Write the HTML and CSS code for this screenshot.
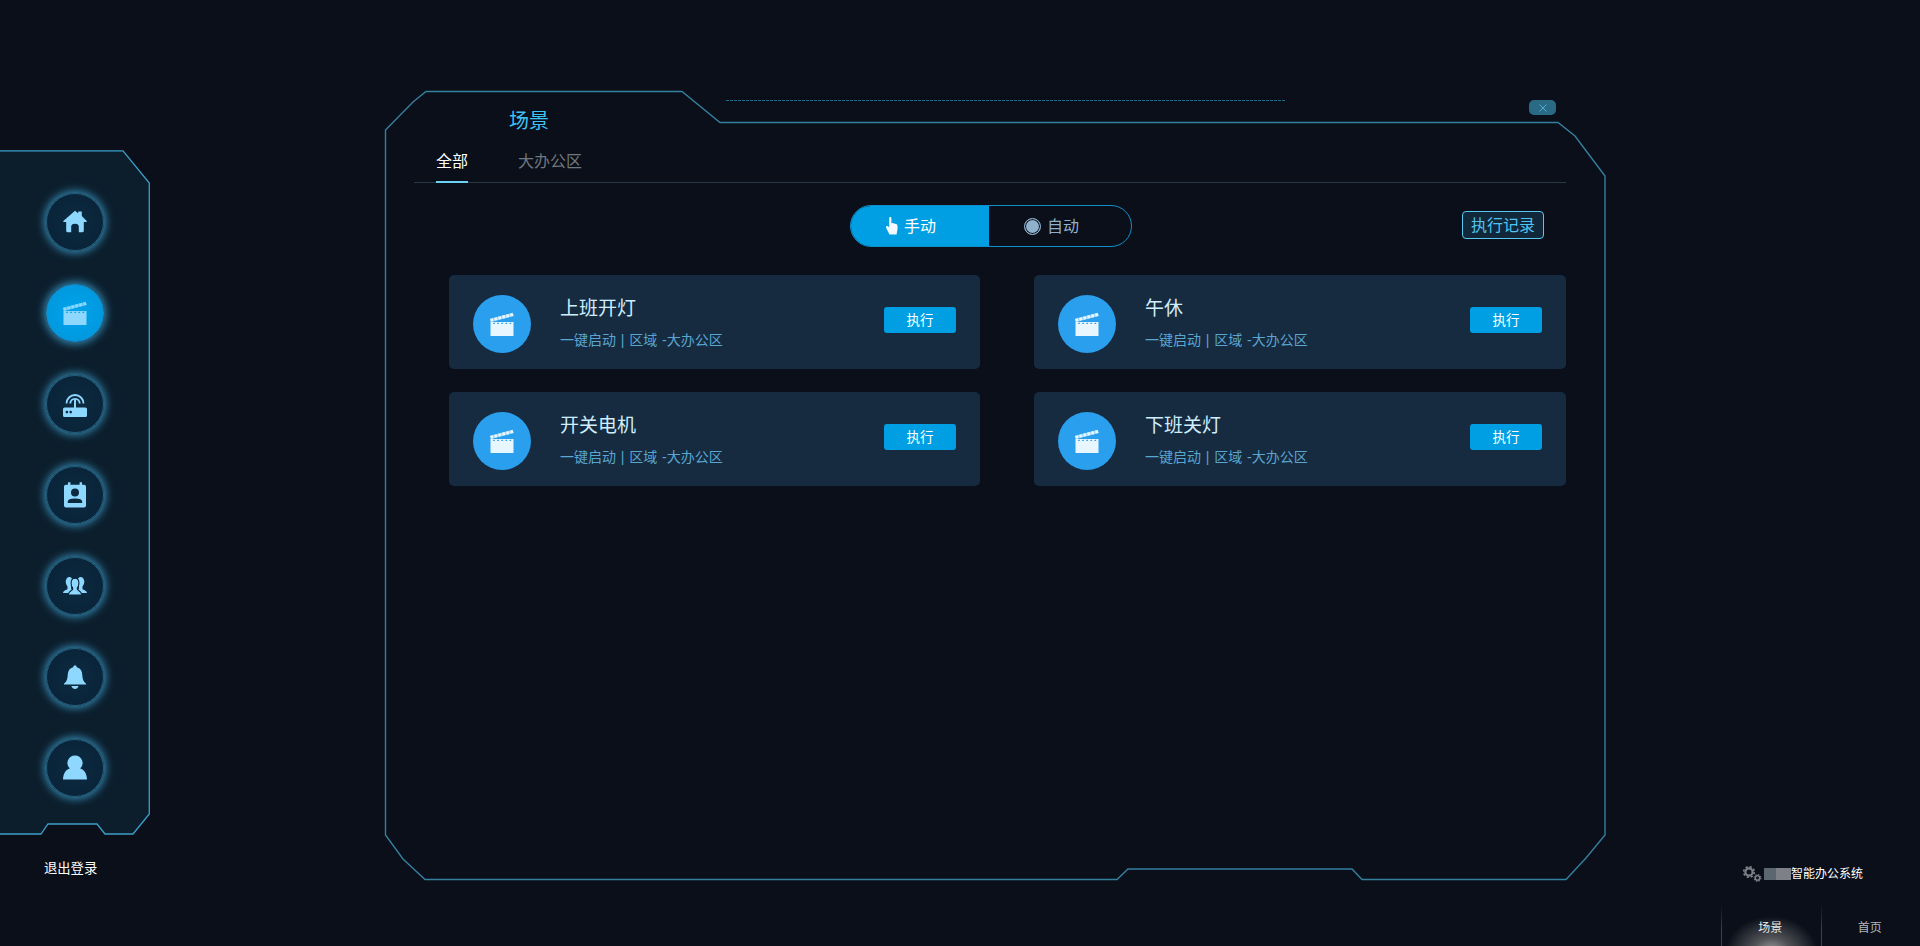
FILE: index.html
```
<!DOCTYPE html>
<html lang="zh-CN">
<head>
<meta charset="utf-8">
<title>场景</title>
<link rel="stylesheet" href="styles.css">
</head>
<body>
<svg class="defs" width="0" height="0" aria-hidden="true">
  <symbol id="clapper" viewBox="0 0 24 24">
    <path fill-rule="evenodd" d="M.5 10h23v15H.5zM3.500 10.800l-.6 1.300h1.600l.6-1.300zM7.600 10.800l-.6 1.300h1.600l.6-1.300zM11.700 10.800l-.6 1.300h1.600l.6-1.300zM15.800 10.800l-.6 1.300h1.600l.6-1.300zM19.900 10.800l-.6 1.300h1.600l.6-1.300z"/>
    <path d="M0 6.800L22.800 .8l.9 3.200L.8 10z" opacity=".6"/>
    <line x1=".5" y1="8.400" x2="23.200" y2="2.400" stroke="currentColor" stroke-width="3" stroke-dasharray="2.800 1.300"/>
  </symbol>
</svg>

<div class="app">
  <aside class="side">
    <div class="side-box">
      <svg class="frame" viewBox="0 0 150 686" aria-hidden="true">
        <path class="side-shape" d="M-2 .8H123L149.300 33V664L133 684H105L97 674H48L41 684H-2z"/>
      </svg>
      <nav class="side-nav">
        <a class="orb">
          <svg class="ico" viewBox="0 0 24 24"><path d="M12 .8l3.200 2.400V1.600h3.600v4.400L24 11.200l-.8.9h-2.400v8.600q0 1.600-1.600 1.600h-3.400v-5.600q0-3-3.800-3t-3.800 3v5.600H4.800q-1.600 0-1.600-1.600v-8.600H.8l-.8-.9z"/></svg>
        </a>
        <a class="orb orb-on">
          <svg class="ico"><use href="#clapper"/></svg>
        </a>
        <a class="orb">
          <svg class="ico" viewBox="0 0 24 24"><path fill-rule="evenodd" d="M1.600 15.400h9.400V7.500h2v7.900h9.400q1.600 0 1.600 1.600v6.400q0 1.600-1.600 1.600H1.600Q0 25 0 23.400V17q0-1.600 1.600-1.600zM3.900 18.800a1.300 1.300 0 100 2.600 1.300 1.300 0 000-2.600zM7.700 18.800a1.300 1.300 0 100 2.600 1.300 1.300 0 000-2.600z"/><path class="arc" d="M3.500 11.500a8.500 8.500 0 0117 0M7.300 11.500a4.700 4.700 0 019.400 0"/></svg>
        </a>
        <a class="orb">
          <svg class="ico" viewBox="0 0 24 24"><path fill-rule="evenodd" d="M5 -.8h2.400v2.600h9.200V-.8H19v2.600h2.100q1.900 0 1.900 1.900v18.800q0 1.900-1.900 1.900H2.900q-1.900 0-1.900-1.900V3.700q0-1.900 1.900-1.900H5zM12 5.400a4 4 0 100 8 4 4 0 000-8zM4.800 20h14.400v-1.400q0-3.100-7.200-3.100t-7.200 3.100z"/></svg>
        </a>
        <a class="orb">
          <svg class="ico" viewBox="0 0 24 24">
            <ellipse cx="6.300" cy="7.800" rx="3.600" ry="4.800"/>
            <ellipse cx="17.700" cy="7.800" rx="3.600" ry="4.800"/>
            <path d="M0 19c.2-2.500 3.400-3 4.500-4.100v-3.500h3.600v3.500l2 1.200-3.500 2.900zM24 19c-.2-2.500-3.400-3-4.500-4.100v-3.500h-3.600v3.500l-2 1.200 3.500 2.900z"/>
            <path class="guy" d="M12 4.300c2.500 0 3.900 2.100 3.900 4.900 0 2.100-.8 3.700-1.500 4.500v1.800c1 1 4 1.700 4.500 5.500H5.100c.5-3.800 3.500-4.500 4.500-5.500v-1.800c-.7-.8-1.500-2.400-1.500-4.500 0-2.800 1.400-4.900 3.900-4.900z"/>
          </svg>
        </a>
        <a class="orb">
          <svg class="ico" viewBox="0 0 24 24"><path d="M12 .2q1.400 0 1.900 2.100 5.100 1.300 5.400 7.700.2 6.300 3.300 8.200.5.400.5 1v.4H.9v-.4q0-.6.5-1 3.100-1.900 3.300-8.200.3-6.400 5.400-7.700.5-2.100 1.900-2.100zM8.400 21h7.200q-1 3-3.600 3t-3.600-3z"/></svg>
        </a>
        <a class="orb">
          <svg class="ico" viewBox="0 0 24 24"><path d="M12 -.6a7.600 7.600 0 015.200 13.100c3.800 1.300 6.600 4.600 6.800 11.100H0c.2-6.500 3-9.800 6.800-11.100A7.600 7.600 0 0112-.6z"/></svg>
        </a>
      </nav>
    </div>
    <a class="logout">退出登录</a>
  </aside>

  <main class="panel">
    <svg class="frame" viewBox="0 0 1221 789" aria-hidden="true">
      <path class="panel-shape" d="M.5 39L28 11 41 .5H297L335 31.500H1173L1190 45 1220 85V744L1201 767 1181 788.500H977L967 778H743L732 788.500H40L18 768 .5 744z"/>
      <line class="dash" x1="341" y1="9.500" x2="901" y2="9.500"/>
    </svg>
    <a class="close">
      <svg viewBox="0 0 8 8" width="8" height="8"><path d="M.5.500l7 7M7.500.500l-7 7"/></svg>
    </a>
    <h1 class="title">场景</h1>
    <div class="tabs">
      <a class="tab tab-on">全部</a>
      <a class="tab">大办公区</a>
    </div>
    <div class="toolbar">
      <div class="switch">
        <a class="sw sw-on">
          <svg class="hand" viewBox="0 0 12 18"><path d="M3.200 1.200C3.200.4 3.700 0 4.300 0s1.100.4 1.100 1.200v5l.9-.2c.7-.1 1 .1 1.200.4l1 .1c.6 0 .9.200 1.100.6.900-.1 1.500.3 1.700 1 .5 2 .3 4.700-.2 6.200L10.600 17.500H3.500L.4 11.500c-.6-1.200-.5-2 .2-2.400.6-.3 1.300 0 2.600 1.500z"/></svg>
          <span class="sw-text">手动</span>
        </a>
        <a class="sw">
          <span class="radio"></span>
          <span class="sw-text">自动</span>
        </a>
      </div>
      <a class="record">执行记录</a>
    </div>
    <section class="cards">
      <article class="card">
        <span class="badge"><svg class="ico"><use href="#clapper"/></svg></span>
        <div class="info"><h2>上班开灯</h2><p>一键启动 | 区域 -大办公区</p></div>
        <button class="run">执行</button>
      </article>
      <article class="card">
        <span class="badge"><svg class="ico"><use href="#clapper"/></svg></span>
        <div class="info"><h2>午休</h2><p>一键启动 | 区域 -大办公区</p></div>
        <button class="run">执行</button>
      </article>
      <article class="card">
        <span class="badge"><svg class="ico"><use href="#clapper"/></svg></span>
        <div class="info"><h2>开关电机</h2><p>一键启动 | 区域 -大办公区</p></div>
        <button class="run">执行</button>
      </article>
      <article class="card">
        <span class="badge"><svg class="ico"><use href="#clapper"/></svg></span>
        <div class="info"><h2>下班关灯</h2><p>一键启动 | 区域 -大办公区</p></div>
        <button class="run">执行</button>
      </article>
    </section>
  </main>

  <footer class="corner">
    <div class="brand">
      <svg class="gears" viewBox="0 0 20 16" width="20" height="16">
        <circle class="gear-a" cx="7" cy="6" r="3.600"/>
        <circle class="teeth-a" cx="7" cy="6" r="5.300"/>
        <circle class="gear-b" cx="15.500" cy="12" r="2.200"/>
        <circle class="teeth-b" cx="15.500" cy="12" r="3.400"/>
      </svg>
      <span class="mask"><i class="m1"></i><i class="m2"></i></span>
      <span>智能办公系统</span>
    </div>
    <div class="dock">
      <a class="dock-item dock-on">场景</a>
      <a class="dock-item">首页</a>
    </div>
  </footer>
</div>
</body>
</html>
```

FILE: styles.css
```
* { box-sizing: border-box; }
html, body { margin: 0; padding: 0; }
body {
  background: #0a0f19;
  font-family: "Liberation Sans", "Noto Sans CJK SC", sans-serif;
  overflow: hidden;
}
a { text-decoration: none; color: inherit; }
h1, h2, p { margin: 0; font-weight: 400; }
.defs { position: absolute; }

.app {
  display: flex;
  width: 1920px;
  height: 946px;
}

.frame {
  position: absolute;
  left: 0;
  top: 0;
  width: 100%;
  height: 100%;
  overflow: visible;
}

/* sidebar */
.side {
  width: 150px;
  flex: none;
  padding-top: 150px;
  display: flex;
  flex-direction: column;
}
.side-box {
  position: relative;
  width: 150px;
  height: 686px;
}
.side-shape {
  fill: #0c1e2c;
  stroke: #3d9fc9;
  stroke-width: 1.300;
}
.side-nav {
  position: relative;
  display: flex;
  flex-direction: column;
  align-items: center;
  gap: 33px;
  padding-top: 43px;
}
.orb {
  width: 58px;
  height: 58px;
  border-radius: 50%;
  display: flex;
  align-items: center;
  justify-content: center;
  color: #8ed8ff;
  background: radial-gradient(circle, #0b2a40 0%, #0a2439 75%, #0f3a55 100%);
  border: 1px solid #24617f;
  box-shadow: 0 0 8px 2px rgba(61, 158, 205, .85);
}
.orb-on {
  background: radial-gradient(circle, #00a4ed 0%, #0098de 75%, #0a86c2 100%);
  border-color: #1a8cc4;
}
.ico {
  width: 24px;
  height: 24px;
  fill: currentColor;
  overflow: visible;
  display: block;
}
.arc {
  fill: none;
  stroke: currentColor;
  stroke-width: 1.800;
}
.guy {
  stroke: #0a2439;
  stroke-width: 1.100;
}
.logout {
  margin: 22px 0 0 44px;
  font-size: 13.300px;
  line-height: 22px;
  color: #fff;
}

/* main panel */
.panel {
  position: relative;
  flex: none;
  width: 1221px;
  height: 789px;
  margin: 91px 0 0 235px;
}
.panel-shape {
  fill: none;
  stroke: #357f9f;
  stroke-width: 1.400;
}
.dash {
  stroke: #1f6a85;
  stroke-width: 1;
  stroke-dasharray: 3 1;
}
.close {
  position: absolute;
  left: 1144px;
  top: 9px;
  width: 27px;
  height: 15px;
  border-radius: 5px;
  background: #2a6a85;
  display: flex;
  align-items: center;
  justify-content: center;
}
.close svg { stroke: #4fa9d0; stroke-width: 1; }
.title {
  position: relative;
  padding: 16px 0 0 124px;
  font-size: 20px;
  line-height: 28px;
  color: #3ec3f7;
}
.tabs {
  position: relative;
  display: flex;
  gap: 50px;
  margin: 11px 0 0 29px;
  width: 1152px;
  height: 37px;
  padding-left: 22px;
  border-bottom: 1px solid #2a3744;
}
.tab {
  height: 37px;
  line-height: 32px;
  font-size: 16px;
  color: #71777d;
}
.tab-on {
  color: #fff;
  border-bottom: 2px solid #6bd2f6;
}
.toolbar {
  position: relative;
  display: flex;
  align-items: flex-start;
  margin-top: 22px;
  height: 42px;
}
.switch {
  display: flex;
  width: 282px;
  height: 42px;
  margin-left: 465px;
  border: 1px solid #0f8fca;
  border-radius: 21px;
  overflow: hidden;
}
.sw {
  display: flex;
  align-items: center;
  justify-content: center;
  gap: 6px;
  flex: 1;
  padding-right: 17px;
  font-size: 16px;
  line-height: 22px;
  color: #8fb1cc;
}
.sw-text { padding-top: 2px; }
.sw-on {
  flex: none;
  width: 139px;
  margin: -1px 0 -1px -1px;
  background: #009fe3;
  color: #fff;
}
.hand { width: 12px; height: 18px; fill: #f2f9ff; }
.radio {
  width: 17px;
  height: 17px;
  border-radius: 50%;
  border: 1px solid #8fb1cc;
  background: #8fb1cc;
  box-shadow: inset 0 0 0 1px #0a0f19;
}
.record {
  margin: 6px 0 0 330px;
  width: 82px;
  height: 28px;
  line-height: 27px;
  text-align: center;
  font-size: 16px;
  color: #4fc4f2;
  background: #10283a;
  border: 1px solid #59c6ef;
  border-radius: 4px;
}
.cards {
  position: relative;
  display: grid;
  grid-template-columns: 531px 532px;
  column-gap: 54px;
  row-gap: 23px;
  margin: 28px 0 0 64px;
}
.card {
  height: 94px;
  display: flex;
  align-items: flex-start;
  padding: 20px 24px 0 24px;
  background: #162b40;
  border-radius: 5px;
}
.badge {
  flex: none;
  width: 58px;
  height: 58px;
  border-radius: 50%;
  background: #2a9fed;
  color: #e8f6ff;
  display: flex;
  align-items: center;
  justify-content: center;
}
.info {
  flex: 1;
  margin-left: 29px;
  margin-top: 1px;
}
.info h2 {
  font-size: 19px;
  line-height: 26px;
  color: #cfeeff;
}
.info p {
  margin-top: 8px;
  font-size: 14px;
  line-height: 20px;
  word-spacing: .9px;
  color: #5aa6d0;
}
.run {
  flex: none;
  width: 72px;
  height: 26px;
  margin-top: 12px;
  padding: 2px 0 0;
  border: 0;
  border-radius: 3px;
  background: #009fe3;
  color: #fff;
  font: 13.500px/24px "Liberation Sans", "Noto Sans CJK SC", sans-serif;
}

/* bottom-right corner */
.corner {
  flex: none;
  width: 199px;
  margin-left: 115px;
  padding-top: 866px;
  display: flex;
  flex-direction: column;
}
.brand {
  display: flex;
  align-items: center;
  height: 16px;
  margin-left: 21px;
  font-size: 12px;
  line-height: 16px;
  color: #fff;
}
.gears { flex: none; }
.gear-a, .gear-b { fill: none; stroke: #7d8188; }
.gear-a { stroke-width: 2.200; }
.gear-b { stroke-width: 1.500; }
.teeth-a, .teeth-b { fill: none; stroke: #7d8188; }
.teeth-a { stroke-width: 1.600; stroke-dasharray: 2.200 1.960; }
.teeth-b { stroke-width: 1.100; stroke-dasharray: 1.400 1.270; }
.mask { display: flex; margin-left: 2px; }
.mask i { display: block; height: 12px; }
.m1 { width: 12px; background: #5c6670; }
.m2 { width: 15px; background: #7e8088; }
.dock {
  display: flex;
  margin-top: 23px;
  height: 41px;
}
.dock-item {
  width: 100px;
  height: 41px;
  padding: 12px 2px 0 0;
  text-align: center;
  font-size: 12px;
  line-height: 22px;
  color: #b5b7ba;
  border-left: 1px solid;
  border-image: linear-gradient(to bottom, rgba(120,130,140,0), #3a424c 60%) 1;
}
.dock-on {
  color: #e8e8e8;
  background: radial-gradient(ellipse 46px 36px at 50% 115%, #a0a0a0 0%, #505256 40%, rgba(10,15,25,0) 100%);
}
```
